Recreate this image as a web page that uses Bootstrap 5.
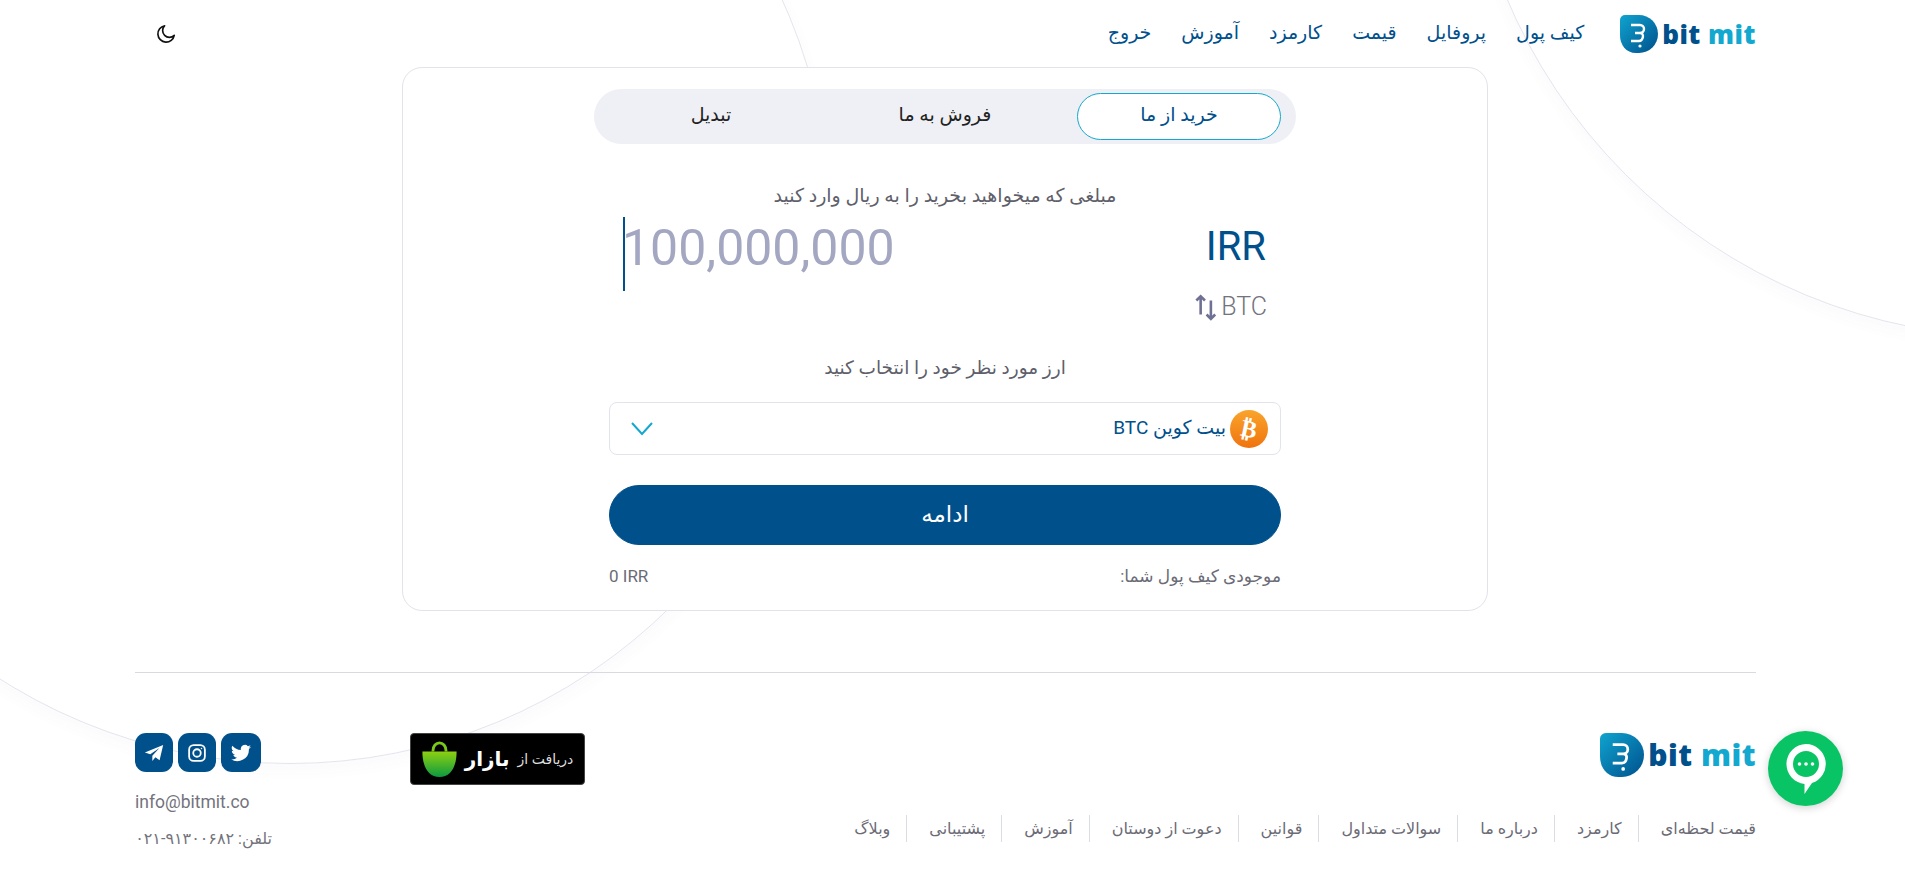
<!DOCTYPE html>
<html lang="fa" dir="rtl">
<head>
    <meta charset="UTF-8">
    <meta name="viewport" content="width=device-width, initial-scale=1.0">
    <title>Bitmit</title>
    <link rel="stylesheet" href="https://cdn.jsdelivr.net/npm/bootstrap@5.3.0/dist/css/bootstrap.min.css">
    <style>
        html, body { height: 885px; overflow: hidden; }
        body { font-family: Roboto, "DejaVu Sans", sans-serif; background: #fff; color: #6b6b76; position: relative; }
        .bg-layer { position: absolute; inset: 0; overflow: hidden; }
        .bg-ring { position: absolute; border: 1px solid #e4e4ee; border-radius: 50%; box-shadow: 0 6px 16px rgba(90, 90, 170, .03); }
        .ring-a { left: -251px; top: -318px; width: 1082px; height: 1082px; }
        .ring-b { left: 1462px; top: -776px; width: 1114px; height: 1114px; }
        .page-wrap { position: relative; width: 1621px; margin-right: 149px; }
        .top-bar { height: 67px; }
        .top-menu { gap: 30px; }
        .top-link { color: #00508c; font-size: 19px; text-decoration: none; }
        .brand-name { direction: ltr; font-family: "Open Sans", sans-serif; font-weight: 800; font-size: 26px; letter-spacing: .5px; line-height: 1; color: #00508c; }
        .brand-name b { color: #13a8cf; font-weight: 800; }
        .swap-card { width: 1086px; height: 544px; margin-right: 268px; border: 1px solid #e2e2ea; border-radius: 20px; background: #fff; padding-top: 21px; }
        .tab-strip { width: 702px; height: 55px; margin: 0 auto; padding: 4px 15px; background: #eff0f5; border-radius: 28px; }
        .tab-strip .nav-link { width: 204px; height: 47px; margin-left: 30px; padding: 0; line-height: 42px; text-align: center; color: #222; font-size: 19px; border: 1px solid transparent; border-radius: 24px; }
        .tab-strip .nav-link.active { color: #00508c; background: #fff; border-color: #13a8cf; }
        .form-area { width: 672px; margin: 0 auto; }
        .hint-text { font-size: 19px; color: #5f5f6b; line-height: 24px; }
        .amount-row { height: 74px; margin-top: 9px; margin-left: 14px; direction: ltr; }
        .amount-input { height: 74px; border-left: 2px solid #00508c; font-size: 50px; line-height: 56px; color: #a4a7c1; padding-top: 3px; text-indent: -3px; }
        .unit-main { font-size: 40px; color: #00508c; line-height: 1; margin-right: 15px; margin-bottom: 14px; }
        .unit-alt { font-size: 25px; font-weight: 300; color: #73737d; direction: ltr; margin-right: 14px; line-height: 28px; }
        .coin-select { height: 53px; border: 1px solid #e3e3ec; border-radius: 8px; color: #00508c; font-size: 19px; padding: 0 12px 0 21px; }
        .go-btn { height: 60px; border-radius: 30px; background: #00508c; border-color: #00508c; color: #fff; font-size: 23px; font-weight: 500; }
        .go-btn:hover { background: #00508c; border-color: #00508c; }
        .balance-line { font-size: 17px; color: #6b6b76; }
        .foot-rule { margin: 0; border-top: 1px solid #d9d9e2; opacity: 1; }
        .foot-link { color: #6b6b76; font-size: 16px; text-decoration: none; padding: 0 16px 0 22px; border-left: 1px solid #dcdce4; line-height: 27px; }
        .foot-link:first-child { padding-right: 0; }
        .foot-link:last-child { border-left: 0; padding-left: 0; }
        .social-btn { display: flex; align-items: center; justify-content: center; width: 38px; height: 39px; border-radius: 11px; background: #00508c; }
        .social-btn.wide { width: 40px; }
        .contact-line { color: #73737d; font-size: 17.5px; white-space: nowrap; }
        .phone-line { font-size: 16px; margin-top: 12px; }
        .store-badge { width: 175px; height: 52px; background: #000; border-radius: 4px; border: 1px solid #444; color: #fff; align-self: flex-start; }
        .store-badge strong { font-size: 20px; line-height: 1; }
        .store-badge span { font-size: 14px; color: #ddd; }
        .chat-btn { position: fixed; left: 1768px; top: 731px; width: 75px; height: 75px; border-radius: 50%; background: #08c464; box-shadow: 0 2px 8px rgba(0, 0, 0, .18); }
    </style>
</head>
<body>
    <div class="bg-layer">
        <div class="bg-ring ring-a"></div>
        <div class="bg-ring ring-b"></div>
    </div>

    <div class="page-wrap">
        <!-- top bar -->
        <header class="top-bar d-flex align-items-center">
            <a href="#" class="d-flex align-items-center gap-1 text-decoration-none" style="margin-left:36px" dir="ltr">
                <svg width="38" height="38" viewBox="0 0 38 38"><defs><linearGradient id="logoFill" x1="0" y1="0" x2="1" y2="1"><stop offset="0" stop-color="#0fa4cf"/><stop offset="1" stop-color="#00508c"/></linearGradient></defs><path d="M0 5a5 5 0 0 1 5-5h14a19 19 0 0 1 0 38h-3C6 38 0 30 0 20z" fill="url(#logoFill)"/><path d="M11 10h9a4 4 0 0 1 0 8h-5m5 0c5 0 3 8-1 8h-8" fill="none" stroke="#fff" stroke-width="2.4"/><circle cx="20" cy="31" r="1.6" fill="#fff"/></svg>
                <span class="brand-name">bit <b>mit</b></span>
            </a>
            <nav class="d-flex top-menu align-items-center">
                <a href="#" class="top-link">کیف پول</a>
                <a href="#" class="top-link">پروفایل</a>
                <a href="#" class="top-link">قیمت</a>
                <a href="#" class="top-link">کارمزد</a>
                <a href="#" class="top-link">آموزش</a>
                <a href="#" class="top-link">خروج</a>
            </nav>
            <button type="button" class="btn p-0 border-0 me-auto" style="margin-left:20px" aria-label="theme">
                <svg class="d-block" width="22" height="22" viewBox="0 0 24 24" fill="none" stroke="#111" stroke-width="1.8" stroke-linejoin="round"><path d="M21 13.5A9 9 0 1 1 10.5 3a7 7 0 0 0 10.500 10.500z"/></svg>
            </button>
        </header>

        <!-- swap card -->
        <main class="swap-card">
            <ul class="nav tab-strip flex-nowrap">
                <li class="nav-item"><a class="nav-link active" href="#">خرید از ما</a></li>
                <li class="nav-item"><a class="nav-link" href="#">فروش به ما</a></li>
                <li class="nav-item"><a class="nav-link" href="#">تبدیل</a></li>
            </ul>
            <div class="form-area">
                <div class="hint-text text-center" style="margin-top:40px">مبلغی که میخواهید بخرید را به ریال وارد کنید</div>
                <div class="amount-row d-flex justify-content-between align-items-center">
                    <div class="amount-input">100,000,000</div>
                    <div class="unit-main">IRR</div>
                </div>
                <div class="d-flex justify-content-start" style="margin-top:2px" dir="ltr">
                    <div class="unit-alt d-flex align-items-center gap-1 ms-auto">
                        <svg width="23" height="28" viewBox="0 0 20 26" fill="none" stroke="#6f7194" stroke-width="2.4"><path d="M5.500 20V3M1.500 7l4-4 4 4M15 7v17M11 20l4 4 4-4"/></svg>
                        <span>BTC</span>
                    </div>
                </div>
                <div class="hint-text text-center" style="margin-top:35px;font-size:18.5px">ارز مورد نظر خود را انتخاب کنید</div>
                <div class="coin-select d-flex align-items-center bg-white" style="margin-top:22px">
                    <svg width="38" height="38" viewBox="0 0 38 38" class="ms-1"><defs><linearGradient id="coinFill" x1="0" y1="0" x2="0" y2="1"><stop offset="0" stop-color="#f9a42c"/><stop offset="1" stop-color="#f0740e"/></linearGradient></defs><circle cx="19" cy="19" r="19" fill="url(#coinFill)"/><text x="19" y="27" text-anchor="middle" font-family="Open Sans" font-weight="700" font-size="24" fill="#fff" transform="rotate(12 19 19)">₿</text></svg>
                    <span>بیت کوین BTC</span>
                    <svg class="me-auto" width="22" height="14" viewBox="0 0 22 14" fill="none" stroke="#13a8cf" stroke-width="2"><path d="M1 1l10 11L21 1"/></svg>
                </div>
                <button type="button" class="btn go-btn w-100 d-block" style="margin-top:30px">ادامه</button>
                <div class="balance-line d-flex justify-content-between" style="margin-top:19px">
                    <span>موجودی کیف پول شما:</span>
                    <span dir="ltr">0 IRR</span>
                </div>
            </div>
        </main>

        <!-- footer -->
        <footer style="margin-top:61px">
            <hr class="foot-rule">
            <div class="d-flex justify-content-between" style="margin-top:60px">
                <div class="d-flex flex-column">
                    <a href="#" class="d-flex align-items-center gap-1 text-decoration-none align-self-start" dir="ltr">
                        <svg width="44" height="44" viewBox="0 0 38 38"><path d="M0 5a5 5 0 0 1 5-5h14a19 19 0 0 1 0 38h-3C6 38 0 30 0 20z" fill="url(#logoFill)"/><path d="M11 10h9a4 4 0 0 1 0 8h-5m5 0c5 0 3 8-1 8h-8" fill="none" stroke="#fff" stroke-width="2.4"/><circle cx="20" cy="31" r="1.6" fill="#fff"/></svg>
                        <span class="brand-name" style="font-size:30px">bit <b>mit</b></span>
                    </a>
                    <nav class="d-flex" style="margin-top:38px">
                        <a href="#" class="foot-link">قیمت لحظه‌ای</a>
                        <a href="#" class="foot-link">کارمزد</a>
                        <a href="#" class="foot-link">درباره ما</a>
                        <a href="#" class="foot-link">سوالات متداول</a>
                        <a href="#" class="foot-link">قوانین</a>
                        <a href="#" class="foot-link">دعوت از دوستان</a>
                        <a href="#" class="foot-link">آموزش</a>
                        <a href="#" class="foot-link">پشتیبانی</a>
                        <a href="#" class="foot-link">وبلاگ</a>
                    </nav>
                </div>
                <div class="d-flex" style="gap:138px">
                    <a href="#" class="store-badge d-flex align-items-center gap-2 px-2 text-decoration-none justify-content-center" dir="rtl">
                        <span>دریافت از</span>
                        <strong>بازار</strong>
                        <svg width="35" height="38" viewBox="0 0 36 40"><defs><linearGradient id="bagFill" x1="0" y1="0" x2="0" y2="1"><stop offset="0" stop-color="#8ed011"/><stop offset="1" stop-color="#0b9a41"/></linearGradient></defs><path d="M11 12c0-12 14-12 14 0" fill="none" stroke="#7cc81a" stroke-width="3"/><path d="M0 12h36c0 16-6 27-18 27S0 28 0 12z" fill="url(#bagFill)"/></svg>
                    </a>
                    <div style="width:137px">
                        <div class="d-flex flex-row-reverse" style="gap:5px">
                            <a href="#" class="social-btn" aria-label="telegram"><svg width="20" height="20" viewBox="0 0 24 24" fill="#fff"><path d="M23 2.500 1 11.300l6.500 2.300L18.500 6 10 15.200v6.300l3.700-4.300 5 3.500z"/></svg></a>
                            <a href="#" class="social-btn" aria-label="instagram"><svg width="18" height="18" viewBox="0 0 24 24" fill="none" stroke="#fff" stroke-width="2.400"><rect x="1.500" y="1.500" width="21" height="21" rx="6"/><circle cx="12" cy="12" r="5"/><circle cx="18" cy="6" r="1" fill="#fff" stroke="none"/></svg></a>
                            <a href="#" class="social-btn wide" aria-label="twitter"><svg width="20" height="20" viewBox="0 0 24 24" fill="#fff"><path d="M24 4.600a10 10 0 0 1-2.800.8 5 5 0 0 0 2.200-2.700 10 10 0 0 1-3.100 1.200 4.900 4.900 0 0 0-8.400 4.500A14 14 0 0 1 1.700 3.200a4.900 4.900 0 0 0 1.500 6.600 4.900 4.900 0 0 1-2.200-.6c0 2.300 1.600 4.400 3.900 4.900a5 5 0 0 1-2.200.1 4.900 4.900 0 0 0 4.600 3.400A9.900 9.900 0 0 1 0 19.600 14 14 0 0 0 21.500 7.200 10 10 0 0 0 24 4.600z"/></svg></a>
                        </div>
                        <div class="contact-line text-start" style="margin-top:17px" dir="ltr">info@bitmit.co</div>
                        <div class="contact-line phone-line">تلفن: <bdi dir="ltr">۰۲۱-۹۱۳۰۰۶۸۲</bdi></div>
                    </div>
                </div>
            </div>
        </footer>
    </div>

    <a href="#" class="chat-btn d-flex align-items-center justify-content-center" aria-label="chat">
        <svg width="40" height="50" viewBox="0 0 40 50"><path d="M20 0a20 20 0 0 1 6 39L18.500 50V39.900A20 20 0 0 1 20 0zm0 7a13 13 0 1 0 0 26 13 13 0 0 0 0-26z" fill="#fff" fill-rule="evenodd"/><circle cx="13.500" cy="20" r="1.800" fill="#fff"/><circle cx="20" cy="20" r="1.800" fill="#fff"/><circle cx="26.500" cy="20" r="1.800" fill="#fff"/></svg>
    </a>

    <script src="https://cdn.jsdelivr.net/npm/bootstrap@5.3.0/dist/js/bootstrap.bundle.min.js"></script>
</body>
</html>
